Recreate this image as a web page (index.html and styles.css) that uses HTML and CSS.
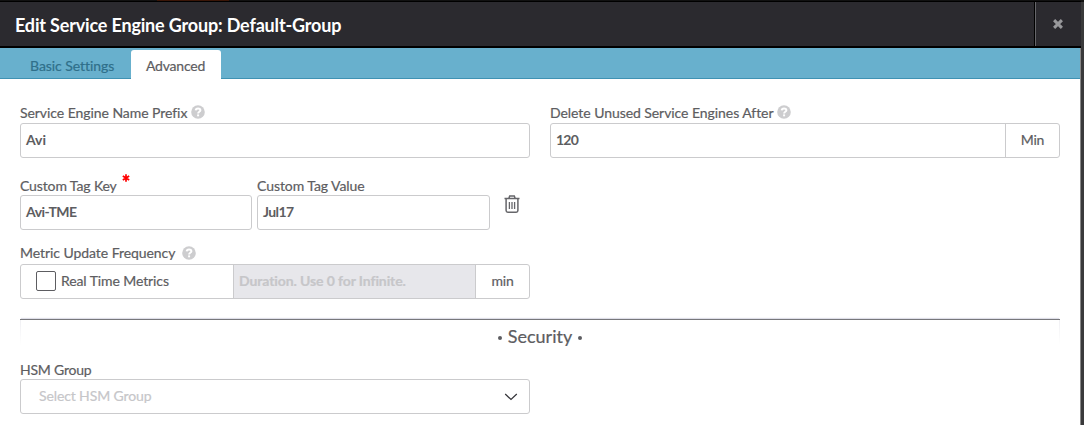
FILE: index.html
```html
<!DOCTYPE html>
<html lang="en">
<head>
<meta charset="utf-8">
<title>Edit Service Engine Group</title>
<link rel="stylesheet" href="styles.css">
</head>
<body>
<div class="modal">
  <header class="header">
    <h1 class="title">Edit Service Engine Group: Default-Group</h1>
    <button class="close" aria-label="Close"><svg width="10" height="10" viewBox="0 0 10 10"><path d="M1.1 1.1L8.9 8.9M8.9 1.1L1.1 8.9" stroke="#98989b" stroke-width="3"/></svg></button>
  </header>
  <nav class="tabs">
    <a class="tab tab-basic">Basic Settings</a>
    <a class="tab tab-active">Advanced</a>
  </nav>
  <main class="form">
    <div class="columns">
      <div class="field">
        <label class="label"><span>Service Engine Name Prefix</span><svg class="help" viewBox="0 0 14 14"><circle cx="7" cy="7" r="6.8" fill="#cdcdcf"/><path d="M4.7 5.4C4.8 2.8 9.4 2.8 9.4 5.3C9.4 6.9 7.1 6.6 7.1 8.4" fill="none" stroke="#fff" stroke-width="2"/><path d="M6.1 9.4h2v1.9h-2z" fill="#fff"/></svg></label>
        <div class="box strong">Avi</div>
      </div>
      <div class="field">
        <label class="label"><span>Delete Unused Service Engines After</span><svg class="help" viewBox="0 0 14 14"><circle cx="7" cy="7" r="6.8" fill="#cdcdcf"/><path d="M4.7 5.4C4.8 2.8 9.4 2.8 9.4 5.3C9.4 6.9 7.1 6.6 7.1 8.4" fill="none" stroke="#fff" stroke-width="2"/><path d="M6.1 9.4h2v1.9h-2z" fill="#fff"/></svg></label>
        <div class="box strong group"><span class="value">120</span><span class="unit">Min</span></div>
      </div>
    </div>
    <div class="tags">
      <div class="field tag-key">
        <label class="label short"><span class="label-key">Custom Tag Key</span><svg class="required" viewBox="0 0 8 8"><path d="M4 .3v7.4M.8 2.1l6.4 3.8M7.2 2.1L.8 5.9" stroke="#f00" stroke-width="1.7"/></svg></label>
        <div class="box strong key-text">Avi-TME</div>
      </div>
      <div class="field tag-value">
        <label class="label short"><span>Custom Tag Value</span></label>
        <div class="box strong value-text">Jul17</div>
      </div>
      <svg class="trash" viewBox="0 0 16 18" fill="none" stroke="#66666a"><path d="M.5 3.6h15M4.8 3.5l.9-2.4h4.6l.9 2.4M2.1 4v11.5q0 1.7 1.7 1.7h8.4q1.7 0 1.7-1.7V4" stroke-width="1.5"/><path d="M5.4 7v7M8 7v7M10.6 7v7" stroke-width="1.3"/></svg>
    </div>
    <div class="field metrics">
      <label class="label tall"><span>Metric Update Frequency</span><svg class="help" viewBox="0 0 14 14"><circle cx="7" cy="7" r="6.8" fill="#cdcdcf"/><path d="M4.7 5.4C4.8 2.8 9.4 2.8 9.4 5.3C9.4 6.9 7.1 6.6 7.1 8.4" fill="none" stroke="#fff" stroke-width="2"/><path d="M6.1 9.4h2v1.9h-2z" fill="#fff"/></svg></label>
      <div class="box group">
        <span class="realtime"><i class="checkbox"></i><span class="realtime-text">Real Time Metrics</span></span>
        <span class="duration">Duration. Use 0 for Infinite.</span>
        <span class="unit">min</span>
      </div>
    </div>
    <section class="security">
      <h2 class="heading"><i class="dot"></i><span>Security</span><i class="dot"></i></h2>
    </section>
    <div class="field hsm">
      <label class="label short"><span class="label-hsm">HSM Group</span></label>
      <div class="box select"><span>Select HSM Group</span><svg width="14" height="8" viewBox="0 0 14 8" fill="none" stroke="#333338" stroke-width="1.2"><path d="M1.2 1L7 6.5L12.8 1"/></svg></div>
    </div>
  </main>
</div>
</body>
</html>
```
FILE: styles.css
```css
* { box-sizing: border-box; }
body {
  margin: 0;
  height: 425px;
  overflow: hidden;
  background: linear-gradient(#111, #111) top / 100% 2px no-repeat, #3a3a3b;
  font: 14px/20px Lato, "Liberation Sans", sans-serif;
  letter-spacing: -0.06px;
  color: #5d5d61;
  -webkit-text-stroke: 0.2px;
}
.modal {
  width: 1081px;
  height: 425px;
  background: #fff;
  border-right: 1px solid #888;
}
.header {
  display: flex;
  width: 1081px;
  height: 48px;
  background:
    linear-gradient(90deg, #111 157px, #3b1607 157px 229px, #111 229px) top / 100% 1px no-repeat,
    linear-gradient(#000, #000) top / 100% 2px no-repeat,
    #2b2a2f;
  border-bottom: 2px solid #000;
}
.title {
  flex: 1;
  margin: 0;
  padding: 2px 0 0 15px;
  font-size: 18px;
  line-height: 46px;
  font-weight: 700;
  letter-spacing: -0.17px;
  -webkit-text-stroke: 0;
  color: #fff;
  white-space: nowrap;
}
.close {
  display: flex;
  align-items: center;
  justify-content: center;
  width: 47px;
  margin-top: 2px;
  padding: 0;
  border: 0;
  border-left: 1px solid #000;
  box-shadow: inset 1px 0 #66666a;
  background: none;
}
.tabs {
  display: flex;
  align-items: flex-end;
  height: 31px;
  padding-left: 15px;
  background: linear-gradient(#3f92b3, #3f92b3) bottom / 100% 1px no-repeat, #68b0cd;
}
.tab { height: 29px; padding-left: 15px; line-height: 31px; white-space: nowrap; }
.tab-basic { width: 116px; color: #2f6f8a; }
.tab-active { width: 90px; background: #fff; border-radius: 3px 3px 0 0; letter-spacing: -0.22px; }
.form { padding: 24px 20px 0; }
.columns { display: grid; grid-template-columns: 510px 510px; gap: 20px; }
.label { display: flex; height: 20px; line-height: 20px; white-space: nowrap; }
.label-key { letter-spacing: -0.12px; }
.label-hsm { letter-spacing: -0.22px; }
.short { height: 18px; line-height: 18px; }
.tall { height: 22px; line-height: 22px; }
.help { width: 14px; height: 14px; margin: 2px 0 0 4px; }
.tall .help { margin: 4px 0 0 7px; }
.box {
  height: 35px;
  padding-left: 5px;
  border: 1px solid #cbcbcd;
  border-radius: 3px;
  line-height: 31px;
  white-space: nowrap;
}
.strong { font-weight: 700; -webkit-text-stroke: 0; }
.key-text { letter-spacing: -0.5px; }
.value-text { letter-spacing: -0.6px; }
.group { display: flex; }
.value { flex: 1; letter-spacing: -0.8px; }
.unit {
  width: 54px;
  border-left: 1px solid #cbcbcd;
  text-align: center;
  font-weight: 400;
  letter-spacing: -0.2px;
  -webkit-text-stroke: 0.2px;
}
.tags { display: flex; margin-top: 19px; }
.tag-key { width: 232px; margin-right: 5px; }
.tag-value { width: 233px; }
.required { width: 8px; height: 8px; margin: -3px 0 0 5px; }
.trash { width: 16px; height: 18px; margin: 18px 0 0 14px; }
.metrics { width: 510px; margin-top: 12px; }
.metrics .box { padding: 0; }
.realtime { display: flex; width: 212px; padding-left: 15px; gap: 5px; }
.realtime-text { letter-spacing: -0.1px; }
.checkbox { width: 20px; height: 20px; margin-top: 6px; border: 1px solid #5d5d61; border-radius: 2px; }
.duration {
  flex: 1;
  padding-left: 5px;
  background: #e7e7eb;
  border-left: 1px solid #cbcbcd;
  font-weight: 700;
  letter-spacing: -0.1px;
  color: #c6c6c9;
}
.security {
  height: 26px;
  margin-top: 20px;
  border-top: 1px solid #77777b;
  box-shadow: 0 -2px 1px -1px #dedee8;
  background: linear-gradient(#f0f0f3, #fff) left / 1px 100% no-repeat, linear-gradient(#f0f0f3, #fff) right / 1px 100% no-repeat, #fff;
}
.heading {
  display: flex;
  align-items: center;
  justify-content: center;
  gap: 6px;
  margin: 0;
  font-size: 18px;
  line-height: 33px;
  font-weight: 400;
  letter-spacing: 0;
}
.dot { width: 4px; height: 4px; margin-top: 2px; border-radius: 50%; background: #5d5d61; }
.hsm { width: 510px; margin-top: 16px; }
.select { display: flex; align-items: center; justify-content: space-between; padding: 0 11px 0 18px; letter-spacing: -0.12px; color: #c6c6c9; }
.select span { margin-top: -2px; }
```
